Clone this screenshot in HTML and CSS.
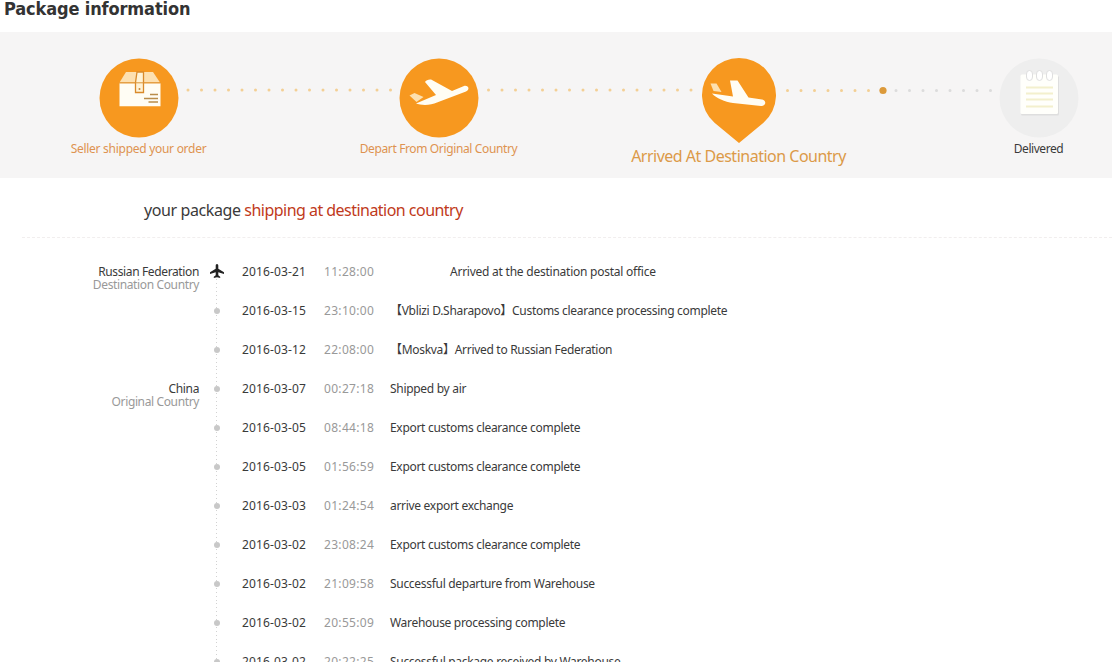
FILE: index.html
```html
<!DOCTYPE html>
<html lang="en">
<head>
    <meta charset="UTF-8">
    <meta name="viewport" content="width=device-width, initial-scale=1.0">
    <title>Package information</title>
    <link rel="stylesheet" href="styles.css">
</head>
<body>
    <h1 class="page-title">Package information</h1>

    <div class="progress">
        <div class="step">
            <svg class="step-icon" width="80" height="80" viewBox="0 0 80 80">
                <circle cx="40" cy="40" r="39.5" fill="#f7981f"/>
                <path d="M27 14h27l7 10.5H20.500z" fill="#fde0b0"/>
                <path d="M20.500 25.200h41v23h-41z" fill="#fffdf4"/>
                <path d="M38 14h6.500v20.500h-8v-10z" fill="#fff3d6" stroke="#d98a2b" stroke-width="1.300"/>
                <path d="M20.500 24.800h41" stroke="#dc9438"/>
                <circle cx="40.500" cy="31" r="1" fill="#c8873a"/>
                <path d="M51 36.500h8M45 40.500h14M49.500 44h9.500" stroke="#b98d4a" stroke-width="1.300"/>
            </svg>
            <span class="step-label">Seller shipped your order</span>
        </div>
        <svg class="track" width="220" height="10">
            <line class="dots" x1="9" y1="5" x2="213" y2="5"/>
        </svg>
        <div class="step step-depart">
            <svg class="step-icon" width="80" height="80" viewBox="0 0 80 80">
                <circle cx="40" cy="40" r="39.5" fill="#f7981f"/>
                <path d="M10.500 37.500l5-2.500 9 4-7 5z" fill="#fde0b0"/>
                <path d="M17 45.500L37 37l-11-13c1-2 5-3 7-2l20 11 12-5c5-1 6 4 2 5.500L38 44.500c-6 3-16 3-21 1z" fill="#fffdf4"/>
            </svg>
            <span class="step-label">Depart From Original Country</span>
        </div>
        <svg class="track" width="220" height="10">
            <line class="dots" x1="9.500" y1="5" x2="213" y2="5"/>
        </svg>
        <div class="step step-current">
            <svg class="step-icon" width="80" height="85" viewBox="0 0 80 85">
                <path d="M40 85L15.500 64.800A37 37 0 1 1 64.500 64.800z" fill="#f7981f"/>
                <path d="M11.500 25.500h6l5 8.500-8-1z" fill="#fde0b0"/>
                <path d="M13 35.500l21 3-3-16h7.500l11 17 13.500 2c5 1 4 7-1 6.500L34 45c-8-1-17-5-21-9.500z" fill="#fffdf4"/>
            </svg>
            <span class="step-label">Arrived At Destination Country</span>
        </div>
        <svg class="track" width="220" height="10">
            <line class="dots" x1="8.500" y1="5.500" x2="94" y2="5.500"/>
            <circle cx="104" cy="5.500" r="3.600" fill="#dc9a3a"/>
            <line class="dots dots-pending" x1="117" y1="5.500" x2="213" y2="5.500"/>
        </svg>
        <div class="step step-pending">
            <svg class="step-icon" width="80" height="80" viewBox="0 0 80 80">
                <circle cx="40" cy="40" r="39.5" fill="#eeeeee"/>
                <rect x="22" y="18" width="38" height="39.500" rx="1.500" fill="#dedede"/>
                <rect x="21.500" y="16.500" width="37.500" height="39.500" rx="1.500" fill="#fffffb"/>
                <path d="M27.500 19v-3a3 3.500 0 0 1 6 0v3a3 3.500 0 0 1-6 0zM37.500 19v-3a3 3.500 0 0 1 6 0v3a3 3.500 0 0 1-6 0zM47.500 19v-3a3 3.500 0 0 1 6 0v3a3 3.500 0 0 1-6 0z" fill="#fff" stroke="#dfdfdf"/>
                <path d="M27 29.500h27M27 35.500h27M27 41.500h27M27 48.500h27" stroke="#f3f0cd" stroke-width="1.800"/>
            </svg>
            <span class="step-label">Delivered</span>
        </div>
    </div>

    <p class="status">your package <span class="status-text">shipping at destination country</span></p>

    <ul class="timeline">
        <li class="event event-latest">
            <div class="place">Russian Federation<span>Destination Country</span></div>
            <div class="rail">
                <svg class="plane" width="14" height="14" viewBox="0 0 14 14">
                    <path d="M7 0c.9 0 1.300.8 1.300 1.800v3L14 8.300v1.600L8.300 8.300v3l1.900 1.500v1.200L7 13.200l-3.200.8v-1.200l1.900-1.500v-3L0 9.900V8.300l5.700-3.500v-3C5.700.8 6.100 0 7 0z" fill="#222"/>
                </svg>
            </div>
            <span class="date">2016-03-21</span><span class="time">11:28:00</span>
            <span class="desc">Arrived at the destination postal office</span>
        </li>
        <li class="event">
            <div class="place"></div>
            <div class="rail"><i class="dot"></i></div>
            <span class="date">2016-03-15</span><span class="time">23:10:00</span>
            <span class="desc">【Vblizi D.Sharapovo】Customs clearance processing complete</span>
        </li>
        <li class="event">
            <div class="place"></div>
            <div class="rail"><i class="dot"></i></div>
            <span class="date">2016-03-12</span><span class="time">22:08:00</span>
            <span class="desc">【Moskva】Arrived to Russian Federation</span>
        </li>
        <li class="event">
            <div class="place">China<span>Original Country</span></div>
            <div class="rail"><i class="dot"></i></div>
            <span class="date">2016-03-07</span><span class="time">00:27:18</span>
            <span class="desc">Shipped by air</span>
        </li>
        <li class="event">
            <div class="place"></div>
            <div class="rail"><i class="dot"></i></div>
            <span class="date">2016-03-05</span><span class="time">08:44:18</span>
            <span class="desc">Export customs clearance complete</span>
        </li>
        <li class="event">
            <div class="place"></div>
            <div class="rail"><i class="dot"></i></div>
            <span class="date">2016-03-05</span><span class="time">01:56:59</span>
            <span class="desc">Export customs clearance complete</span>
        </li>
        <li class="event">
            <div class="place"></div>
            <div class="rail"><i class="dot"></i></div>
            <span class="date">2016-03-03</span><span class="time">01:24:54</span>
            <span class="desc">arrive export exchange</span>
        </li>
        <li class="event">
            <div class="place"></div>
            <div class="rail"><i class="dot"></i></div>
            <span class="date">2016-03-02</span><span class="time">23:08:24</span>
            <span class="desc">Export customs clearance complete</span>
        </li>
        <li class="event">
            <div class="place"></div>
            <div class="rail"><i class="dot"></i></div>
            <span class="date">2016-03-02</span><span class="time">21:09:58</span>
            <span class="desc">Successful departure from Warehouse</span>
        </li>
        <li class="event">
            <div class="place"></div>
            <div class="rail"><i class="dot"></i></div>
            <span class="date">2016-03-02</span><span class="time">20:55:09</span>
            <span class="desc">Warehouse processing complete</span>
        </li>
        <li class="event">
            <div class="place"></div>
            <div class="rail"><i class="dot"></i></div>
            <span class="date">2016-03-02</span><span class="time">20:22:25</span>
            <span class="desc">Successful package received by Warehouse</span>
        </li>
    </ul>
</body>
</html>
```
FILE: styles.css
```css
* {
    box-sizing: border-box;
}

body {
    margin: 0;
    height: 662px;
    overflow: hidden;
    background: #fff;
    color: #3a3a3a;
    font-family: Tahoma, "Noto Sans", "Noto Sans CJK SC", sans-serif;
    font-size: 12px;
}

.page-title {
    margin: 0;
    height: 32px;
    padding-left: 4px;
    color: #333;
    font-family: Tahoma, "DejaVu Sans Condensed", sans-serif;
    font-size: 18px;
    line-height: 17px;
    letter-spacing: -0.13px;
}

.progress {
    display: flex;
    height: 146px;
    padding: 26px 0 0 98.5px;
    background: #f6f5f5;
}

.step {
    display: flex;
    flex-direction: column;
    align-items: center;
    flex: none;
    width: 80px;
}

.step-icon {
    flex: none;
}

.step-label {
    color: #de9350;
    line-height: 22px;
    letter-spacing: -0.28px;
    white-space: nowrap;
}

.step-depart .step-label {
    letter-spacing: -0.37px;
}

.step-current .step-label {
    color: #dc9a48;
    font-size: 16px;
    line-height: 26px;
    letter-spacing: -0.5px;
}

.step-pending .step-label {
    color: #3a3a3a;
    letter-spacing: -0.45px;
}

.track {
    flex: none;
    margin-top: 27px;
}

.dots {
    stroke: #f3cf94;
    stroke-width: 3;
    stroke-linecap: round;
    stroke-dasharray: 0 13.5;
}

.dots-pending {
    stroke: #dcdcdc;
}

.status {
    margin: 0 0 0 22px;
    height: 60px;
    padding-left: 122px;
    border-bottom: 1px dashed #f1eeee;
    font-size: 16px;
    line-height: 64px;
    letter-spacing: -0.4px;
}

.status-text {
    color: #bf3a20;
    letter-spacing: -0.53px;
}

.timeline {
    margin: 0;
    padding: 14px 0 0;
    list-style: none;
}

.event {
    display: grid;
    grid-template-columns: 199px 43px 82px 66px 1fr;
    height: 39px;
    line-height: 39px;
    white-space: nowrap;
}

.place {
    padding-top: 13px;
    line-height: 13px;
    letter-spacing: -0.37px;
    text-align: right;
}

.place span {
    display: block;
    color: #999;
}

.rail {
    display: flex;
    align-items: center;
    width: 35px;
    justify-content: center;
    background: repeating-linear-gradient(#d2d2d2 0 1px, transparent 1px 4px) 17px 0 / 1px 100% no-repeat;
}

.event-latest .rail {
    background-position: 17px 27px;
}

.plane {
    margin-bottom: 1px;
}

.dot {
    width: 6px;
    height: 6px;
    border-radius: 50%;
    background: #c8c8c8;
}

.date {
    letter-spacing: 0.13px;
}

.time {
    color: #999;
    letter-spacing: 0.32px;
}

.desc {
    letter-spacing: -0.3px;
}

.event-latest .desc {
    padding-left: 60px;
    letter-spacing: -0.24px;
}
```
